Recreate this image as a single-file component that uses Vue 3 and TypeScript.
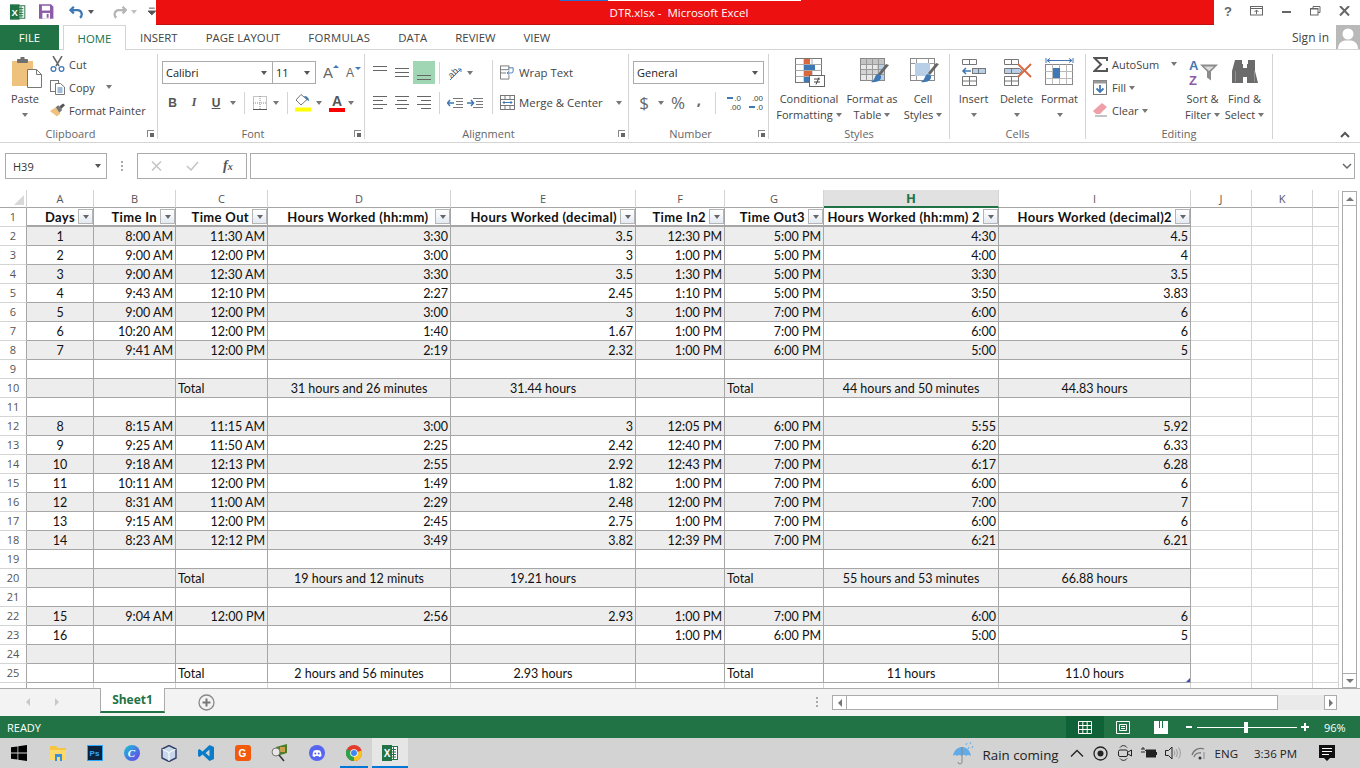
<script setup lang="ts">
interface SheetRow {
  n: number
  cells: string[]
  total?: boolean
}

const columns = ['A', 'B', 'C', 'D', 'E', 'F', 'G', 'H', 'I', 'J', 'K', '']

const headers = [
  'Days', 'Time In', 'Time Out', 'Hours Worked (hh:mm)\u00a0', 'Hours Worked (decimal)',
  'Time In2', 'Time Out3', 'Hours Worked (hh:mm) 2', 'Hours Worked (decimal)2',
]

const raw: (string[] | null)[] = [
  ['1', '8:00 AM', '11:30 AM', '3:30', '3.5', '12:30 PM', '5:00 PM', '4:30', '4.5'],
  ['2', '9:00 AM', '12:00 PM', '3:00', '3', '1:00 PM', '5:00 PM', '4:00', '4'],
  ['3', '9:00 AM', '12:30 AM', '3:30', '3.5', '1:30 PM', '5:00 PM', '3:30', '3.5'],
  ['4', '9:43 AM', '12:10 PM', '2:27', '2.45', '1:10 PM', '5:00 PM', '3:50', '3.83'],
  ['5', '9:00 AM', '12:00 PM', '3:00', '3', '1:00 PM', '7:00 PM', '6:00', '6'],
  ['6', '10:20 AM', '12:00 PM', '1:40', '1.67', '1:00 PM', '7:00 PM', '6:00', '6'],
  ['7', '9:41 AM', '12:00 PM', '2:19', '2.32', '1:00 PM', '6:00 PM', '5:00', '5'],
  null,
  ['', '', 'Total', '31 hours and 26 minutes', '31.44 hours', '', 'Total', '44 hours and 50 minutes', '44.83 hours'],
  null,
  ['8', '8:15 AM', '11:15 AM', '3:00', '3', '12:05 PM', '6:00 PM', '5:55', '5.92'],
  ['9', '9:25 AM', '11:50 AM', '2:25', '2.42', '12:40 PM', '7:00 PM', '6:20', '6.33'],
  ['10', '9:18 AM', '12:13 PM', '2:55', '2.92', '12:43 PM', '7:00 PM', '6:17', '6.28'],
  ['11', '10:11 AM', '12:00 PM', '1:49', '1.82', '1:00 PM', '7:00 PM', '6:00', '6'],
  ['12', '8:31 AM', '11:00 AM', '2:29', '2.48', '12:00 PM', '7:00 PM', '7:00', '7'],
  ['13', '9:15 AM', '12:00 PM', '2:45', '2.75', '1:00 PM', '7:00 PM', '6:00', '6'],
  ['14', '8:23 AM', '12:12 PM', '3:49', '3.82', '12:39 PM', '7:00 PM', '6:21', '6.21'],
  null,
  ['', '', 'Total', '19 hours and 12 minuts', '19.21 hours', '', 'Total', '55 hours and 53 minutes', '66.88 hours'],
  null,
  ['15', '9:04 AM', '12:00 PM', '2:56', '2.93', '1:00 PM', '7:00 PM', '6:00', '6'],
  ['16', '', '', '', '', '1:00 PM', '6:00 PM', '5:00', '5'],
  null,
  ['', '', 'Total', '2 hours and 56 minutes', '2.93 hours', '', 'Total', '11 hours', '11.0 hours'],
]

const rows: SheetRow[] = raw.map((cells, i) => ({
  n: i + 2,
  cells: cells ?? Array(9).fill(''),
  total: cells?.[2] === 'Total',
}))

const tabs = ['INSERT', 'PAGE LAYOUT', 'FORMULAS', 'DATA', 'REVIEW', 'VIEW']

function cellClass(row: SheetRow, col: number) {
  let align = col === 0 ? 'center' : 'right'
  if (row.total) {
    if (col === 2 || col === 6) align = 'left'
    else align = 'center'
  }
  return [align, row.n % 2 === 0 ? 'band' : '', col === 8 ? 'edge' : '']
}
</script>

<template>
  <div class="app">
    <header class="titlebar">
      <div class="qat">
        <svg class="xl" width="18" height="18" viewBox="0 0 18 18">
          <rect x="7" y="2.500" width="9.500" height="13" fill="#fff" stroke="#217346" />
          <path d="M10 5.500h5M10 8h5M10 10.500h5M10 13h5M12.500 3v12" stroke="#217346" fill="none" />
          <rect x="1" y="1" width="10" height="16" fill="#217346" />
          <text x="6" y="13" text-anchor="middle" class="xl-x">X</text>
        </svg>
        <svg width="15" height="15" viewBox="0 0 15 15">
          <path d="M0 0h12.500L15 2.500V15H0z" fill="#8d5aa8" />
          <rect x="3" y="1.500" width="8.500" height="5" fill="#fff" />
          <rect x="3.500" y="9" width="8" height="6" fill="#fff" />
          <rect x="8" y="10" width="2" height="4" fill="#8d5aa8" />
        </svg>
        <svg width="16" height="14" viewBox="0 0 16 14">
          <path d="M5 1.500 1.500 5 5 8.500M2 5h7.500a4.500 4.500 0 0 1 2 8" fill="none" stroke="#3f78b5" stroke-width="2.400" />
        </svg>
        <span class="caret dark" />
        <svg class="redo" width="16" height="14" viewBox="0 0 16 14">
          <path d="M11 1.500 14.500 5 11 8.500M14 5H6.500a4.500 4.500 0 0 0-2 8" fill="none" stroke="#b5b5b5" stroke-width="2.400" />
        </svg>
        <span class="caret pale" />
        <svg class="custom" width="8" height="9" viewBox="0 0 8 9">
          <path d="M1 1h6M0 4h8L4 8z" stroke="#555" stroke-width="1" fill="#555" />
        </svg>
      </div>
      <div class="redband">
        <i class="progress"><b /></i>
        <span>DTR.xlsx -&nbsp; Microsoft Excel</span>
      </div>
      <div class="winctl">
        <span class="help">?</span>
        <svg width="14" height="10" viewBox="0 0 14 10">
          <rect x=".5" y=".5" width="12" height="8.500" fill="none" stroke="#666" />
          <path d="M.5 2.500h12M6.500 8V4M4.500 6l2-2 2 2" fill="none" stroke="#666" />
        </svg>
        <svg width="10" height="10" viewBox="0 0 10 10"><rect y="5" width="9" height="2" fill="#666" /></svg>
        <svg width="11" height="10" viewBox="0 0 11 10">
          <path d="M3 2V.5h7v6H8" fill="none" stroke="#666" />
          <rect x=".5" y="2.500" width="7.500" height="6.500" fill="none" stroke="#666" />
          <path d="M.5 3h7.500" stroke="#666" />
        </svg>
        <svg width="11" height="10" viewBox="0 0 11 10">
          <path d="M1 0 10 9.500M10 0 1 9.500" stroke="#666" stroke-width="2" />
        </svg>
      </div>
    </header>

    <nav class="tabbar">
      <span class="file">FILE</span>
      <span class="home">HOME</span>
      <span v-for="t in tabs" :key="t" class="tab">{{ t }}</span>
      <span class="signin">Sign in</span>
      <svg class="avatar" width="24" height="24" viewBox="0 0 24 24">
        <rect width="24" height="24" fill="#b9b9b9" />
        <circle cx="12" cy="9" r="5.500" fill="#fff" />
        <path d="M2 24c0-6 4-8 7-8.500h6c3 .5 7 2.500 7 8.500z" fill="#fff" />
      </svg>
    </nav>

    <section class="ribbon">
      <!-- Clipboard -->
      <div class="group g-clip">
        <div class="body">
          <div class="big paste">
            <svg class="big-icon" width="30" height="33" viewBox="0 0 30 33">
              <rect x="0" y="4" width="21" height="25" fill="#eec27d" />
              <rect x="5" y="2" width="11" height="4" rx="1" fill="#6f6f6f" />
              <rect x="8.500" y="0" width="4" height="3" fill="#6f6f6f" />
              <path d="M15.500 12.500h9l5 5v13h-14z" fill="#fff" stroke="#777" />
              <path d="M24.500 12.500v5h5" fill="none" stroke="#777" />
            </svg>
            <span>Paste</span>
            <i class="caret" />
          </div>
          <div class="smalls">
            <div class="small">
              <svg width="15" height="16" viewBox="0 0 15 16">
                <path d="M3 0l6 10M12 0 6 10" stroke="#666" stroke-width="1.500" />
                <circle cx="3.500" cy="13" r="2.400" fill="none" stroke="#3f78b5" stroke-width="1.300" />
                <circle cx="11.500" cy="13" r="2.400" fill="none" stroke="#3f78b5" stroke-width="1.300" />
              </svg>
              <span>Cut</span>
            </div>
            <div class="small">
              <svg width="15" height="15" viewBox="0 0 15 15">
                <rect x=".5" y=".5" width="8" height="11" fill="#fff" stroke="#777" />
                <path d="M5.500 3.500h5l4 3.500v7.500h-9z" fill="#fff" stroke="#777" />
                <path d="M7.500 8h5M7.500 10h5M7.500 12h5" stroke="#3f78b5" />
              </svg>
              <span>Copy</span>
              <i class="caret copy-caret" />
            </div>
            <div class="small">
              <svg width="15" height="15" viewBox="0 0 16 15">
                <path d="M0 8l6-4 5 7-4 3C6 12 2 10 0 8z" fill="#eec27d" />
                <path d="M6 4l3-2 4 5-3 3z" fill="#777" />
                <path d="M10 3l4-3 2 2-4 4z" fill="#555" />
              </svg>
              <span>Format Painter</span>
            </div>
          </div>
        </div>
        <div class="label clip-l">Clipboard<i class="launch" /></div>
      </div>

      <!-- Font -->
      <div class="group g-font">
        <div class="body col">
          <div class="row r1">
            <div class="combo font-name">Calibri<i class="caret dark" /></div>
            <div class="combo font-size">11<i class="caret dark" /></div>
            <span class="grow-a big-a">A<i class="up" /></span>
            <span class="grow-a small-a">A<i class="down" /></span>
          </div>
          <div class="row r2">
            <span class="tb w21 bold">B</span>
            <span class="tb w22 ital">I</span>
            <span class="tb w22 under">U</span>
            <span class="cr"><i class="caret" /></span>
            <i class="vsep" />
            <span class="tb w20">
              <svg width="14" height="14" viewBox="0 0 14 14">
                <rect x=".5" y=".5" width="13" height="13" fill="none" stroke="#888" stroke-dasharray="1 1" />
                <path d="M7 0v14M0 7h14" stroke="#888" stroke-dasharray="1 1" />
                <path d="M0 13.500h14" stroke="#555" />
              </svg>
            </span>
            <span class="cr"><i class="caret" /></span>
            <i class="vsep" />
            <span class="tb w20">
              <svg width="17" height="18" viewBox="0 0 17 18">
                <path d="M6 .5 1 6l5 5 6-5.500z" fill="#fff" stroke="#777" />
                <path d="M9 2c3 0 5 2 5 5l-2-1z" fill="#3f78b5" />
                <rect y="13.500" width="16" height="4" fill="#ffff00" />
              </svg>
            </span>
            <span class="cr"><i class="caret" /></span>
            <span class="tb w16 acolor">A<i /></span>
            <span class="cr"><i class="caret" /></span>
          </div>
        </div>
        <div class="label with-l">Font<i class="launch" /></div>
      </div>

      <!-- Alignment -->
      <div class="group g-align">
        <div class="body">
          <div class="col aligncol">
            <div class="row r1">
              <span class="tb w22"><i class="lines top"><b /><b /></i></span>
              <span class="tb w22"><i class="lines"><b /><b /><b /></i></span>
              <span class="tb w22 on"><i class="lines bottom"><b /><b /></i></span>
              <i class="vsep s4" />
              <span class="tb w18">
                <svg width="16" height="16" viewBox="0 0 16 16">
                  <text x="1" y="11" transform="rotate(-45 6 8)" class="orient">ab</text>
                  <path d="M3 15 14 4M11 4h3v3" fill="none" stroke="#3f78b5" />
                </svg>
              </span>
              <span class="cr"><i class="caret" /></span>
            </div>
            <div class="row r2">
              <span class="tb w22"><i class="lines al"><b /><b class="s" /><b /><b class="s" /></i></span>
              <span class="tb w22"><i class="lines ac"><b /><b class="s" /><b /><b class="s" /></i></span>
              <span class="tb w22"><i class="lines ar"><b /><b class="s" /><b /><b class="s" /></i></span>
              <i class="vsep s4" />
              <span class="tb w18">
                <svg width="16" height="10" viewBox="0 0 16 10">
                  <path d="M6 .5h10M9 3.500h7M9 6.500h7M6 9.500h10" stroke="#777" />
                  <path d="M0 5h7M3 2 .5 5 3 8" fill="none" stroke="#3f78b5" stroke-width="1.500" />
                </svg>
              </span>
              <span class="tb w22">
                <svg width="16" height="10" viewBox="0 0 16 10">
                  <path d="M6 .5h10M9 3.500h7M9 6.500h7M6 9.500h10" stroke="#777" />
                  <path d="M0 5h7M4 2l2.500 3L4 8" fill="none" stroke="#3f78b5" stroke-width="1.500" />
                </svg>
              </span>
            </div>
          </div>
          <i class="vsep tall" />
          <div class="col wrapcol">
            <div class="row r1 txt">
              <svg width="15" height="15" viewBox="0 0 16 15">
                <rect x=".5" y=".5" width="9" height="4" fill="none" stroke="#777" />
                <path d="M.5 5v9.500h9v-4M.5 8h6" fill="none" stroke="#777" />
                <path d="M9 2.500h5v3.500a2 2 0 0 1-2 2H8M10 6 7.500 8l2.500 2" fill="none" stroke="#3f78b5" />
              </svg>
              <span>Wrap Text</span>
            </div>
            <div class="row r2 txt">
              <svg width="15" height="15" viewBox="0 0 15 15">
                <rect x=".5" y=".5" width="14" height="14" fill="none" stroke="#777" />
                <path d="M.5 4.500h14M.5 10.500h14M5 .5v4M10 .5v4M5 10.500v4M10 10.500v4" stroke="#777" />
                <path d="M3 7.500h9M4.500 6 3 7.500 4.500 9M10.500 6 12 7.500 10.500 9" fill="none" stroke="#3f78b5" />
              </svg>
              <span>Merge &amp; Center</span>
              <i class="caret merge-caret" />
            </div>
          </div>
        </div>
        <div class="label with-l">Alignment<i class="launch" /></div>
      </div>

      <!-- Number -->
      <div class="group g-num">
        <div class="body col">
          <div class="row r1"><div class="combo num">General<i class="caret dark" /></div></div>
          <div class="row r2">
            <span class="tb w22 sym dollar">$</span>
            <span class="cr"><i class="caret" /></span>
            <span class="tb w22 sym pct-sym">%</span>
            <span class="tb w20 sym comma">,</span>
            <i class="vsep s7" />
            <span class="dec"><i class="dline"><i class="arrow-l" />.0</i><i class="dline">.00</i></span>
            <span class="dec"><i class="dline">.00</i><i class="dline"><i class="arrow-r" />.0</i></span>
          </div>
        </div>
        <div class="label with-l">Number<i class="launch" /></div>
      </div>

      <!-- Styles -->
      <div class="group g-styles">
        <div class="body bigs">
          <div class="big cond">
            <svg class="big-icon" width="31" height="33" viewBox="0 0 31 33">
              <rect x=".5" y="1.500" width="26" height="24" fill="#fff" stroke="#777" />
              <path d="M9 1.500v24M17 1.500v24M.5 7.500h26M.5 13.500h26M.5 19.500h26" stroke="#aaa" />
              <rect x="9" y="2" width="6" height="5" fill="#d9683f" />
              <rect x="9" y="8" width="11" height="5" fill="#3f78b5" />
              <rect x="9" y="14" width="8" height="5" fill="#d9683f" />
              <rect x="9" y="20" width="5" height="5" fill="#3f78b5" />
              <rect x="14.500" y="18.500" width="15" height="11" fill="#fff" stroke="#666" />
              <path d="M19 22h6M19 25h6M24 20.500l-3 7" stroke="#444" />
            </svg>
            <span>Conditional</span>
            <span>Formatting<i class="caret in" /></span>
          </div>
          <div class="big ftable">
            <svg class="big-icon" width="30" height="33" viewBox="0 0 30 33">
              <rect x=".5" y="1.500" width="24" height="22" fill="#e8e8e8" stroke="#888" />
              <rect x="1" y="2" width="23" height="5" fill="#c4c4c4" />
              <rect x="17" y="7" width="7" height="16" fill="#b9cfe8" />
              <rect x="1" y="12" width="16" height="5" fill="#d4d4d4" />
              <path d="M6.500 1.500v22M12.500 1.500v22M18.500 1.500v22M.5 7.500h24M.5 12.500h24M.5 17.500h24" stroke="#999" />
              <path d="M29 8l-9 11-2-2 8-10z" fill="#666" />
              <path d="M18 17c-4 1-2 5-7 8 6 1 11-2 10-6z" fill="#3f78b5" />
            </svg>
            <span>Format as</span>
            <span>Table<i class="caret in" /></span>
          </div>
          <div class="big cstyles">
            <svg class="big-icon" width="30" height="33" viewBox="0 0 30 33">
              <rect x=".5" y="1.500" width="24" height="22" fill="#fff" stroke="#888" />
              <path d="M6.500 1.500v5M18.500 1.500v5M.5 6.500h24M.5 18.500h24M6.500 18.500v5M18.500 18.500v5" stroke="#999" />
              <rect x="5" y="6" width="15" height="13" fill="#b9cfe8" />
              <path d="M29 7l-9 11-2-2 8-10z" fill="#666" />
              <path d="M18 17c-4 1-2 5-7 8 6 1 11-2 10-6z" fill="#3f78b5" />
            </svg>
            <span>Cell</span>
            <span>Styles<i class="caret in" /></span>
          </div>
        </div>
        <div class="label">Styles</div>
      </div>

      <!-- Cells -->
      <div class="group g-cells">
        <div class="body bigs">
          <div class="big cell-btn">
            <svg class="big-icon" width="27" height="33" viewBox="0 0 27 33">
              <path d="M2.500 2.500h14v5h-14zM9.500 2.500v5M2.500 19.500h14v9h-14zM2.500 24h14M9.500 19.500v9" fill="none" stroke="#777" />
              <rect x="12.500" y="11.500" width="13" height="5" fill="#b9cfe8" stroke="#777" />
              <path d="M18.500 11.500v5" stroke="#777" />
              <path d="M11 14H3M6 11 3 14l3 3" fill="none" stroke="#3f78b5" stroke-width="1.500" />
            </svg>
            <span>Insert</span>
            <i class="caret under-c" />
          </div>
          <div class="big cell-btn">
            <svg class="big-icon" width="31" height="33" viewBox="0 0 31 33">
              <path d="M3.500 2.500h14v5h-14zM10.500 2.500v5M3.500 19.500h14v9h-14zM3.500 24h14M10.500 19.500v9" fill="none" stroke="#777" />
              <path d="M3.500 11.500h15l3 2.500-3 2.500h-15zM10.500 11.500v5" fill="#b9cfe8" stroke="#777" />
              <path d="M17 7l13 13M30 7 17 20" stroke="#d9683f" stroke-width="1.800" />
            </svg>
            <span>Delete</span>
            <i class="caret under-c" />
          </div>
          <div class="big cell-btn">
            <svg class="big-icon" width="30" height="33" viewBox="0 0 30 33">
              <path d="M1 1v5M28 1v5M2 3.500h25M5 1.500 2 3.500l3 2M24 1.500l3 2-3 2" fill="none" stroke="#3f78b5" />
              <rect x=".5" y="7.500" width="27" height="20" fill="#fff" stroke="#888" />
              <path d="M7.500 7.500v20M14.500 7.500v20M21.500 7.500v20M.5 14.500h27M.5 21.500h27" stroke="#bbb" />
              <rect x="8" y="11" width="7" height="10" fill="#3f78b5" />
            </svg>
            <span>Format</span>
            <i class="caret under-c" />
          </div>
        </div>
        <div class="label">Cells</div>
      </div>

      <!-- Editing -->
      <div class="group g-edit">
        <div class="body">
          <div class="smalls edits">
            <div class="small">
              <svg width="15" height="15" viewBox="0 0 15 15">
                <path d="M14 4V1H1.500L8 7.500 1.500 14H14v-3" fill="none" stroke="#555" stroke-width="2" />
              </svg>
              <span>AutoSum</span>
              <i class="caret sum-caret" />
            </div>
            <div class="small">
              <svg width="15" height="15" viewBox="0 0 15 15">
                <rect x=".5" y=".5" width="13" height="14" fill="#fff" stroke="#777" />
                <rect x=".5" y=".5" width="13" height="3" fill="#999" />
                <path d="M7 5v7M3.500 8.500 7 12l3.500-3.500" fill="none" stroke="#3f78b5" stroke-width="1.800" />
              </svg>
              <span>Fill<i class="caret in" /></span>
            </div>
            <div class="small">
              <svg width="15" height="14" viewBox="0 0 15 14">
                <path d="M9 0l5 4-7 7H3L0 8z" fill="#ee9fa8" />
                <path d="M2 13h12" stroke="#888" />
              </svg>
              <span>Clear<i class="caret in" /></span>
            </div>
          </div>
          <div class="big sort">
            <svg class="big-icon" width="32" height="33" viewBox="0 0 32 33">
              <text x="2" y="13" class="az a">A</text>
              <text x="2" y="28" class="az z">Z</text>
              <path d="M13 7.500h18l-7 7v9l-4-3v-6z" fill="#8c8c8c" />
              <path d="M17 9.500h10l-5 4.500z" fill="#dcdcdc" />
            </svg>
            <span>Sort &amp;</span>
            <span>Filter<i class="caret in" /></span>
          </div>
          <div class="big find">
            <svg class="big-icon" width="28" height="33" viewBox="0 0 28 33">
              <path d="M4 3h7v4h1v19H1V14zM17 3h7v11l3 12H16V7h1z" fill="#6b6b6b" />
              <rect x="12" y="11" width="4" height="9" fill="#6b6b6b" />
              <path d="M13.500 4v6M14.500 4v6" stroke="#fff" />
              <path d="M4.500 14v11M23.500 14v11" stroke="#909090" />
            </svg>
            <span>Find &amp;</span>
            <span>Select<i class="caret in" /></span>
          </div>
        </div>
        <div class="label">Editing</div>
      </div>

      <div class="collapse">
        <svg width="10" height="7" viewBox="0 0 10 7"><path d="M1 6l4-4 4 4" fill="none" stroke="#555" stroke-width="2" /></svg>
      </div>
    </section>

    <section class="formula">
      <div class="namebox">H39<i class="caret dark" /></div>
      <div class="fdots"><b /><b /><b /></div>
      <div class="fbtns">
        <svg width="11" height="10" viewBox="0 0 11 10"><path d="M1 .5l9 9M10 .5l-9 9" stroke="#c4c4c4" stroke-width="1.500" /></svg>
        <svg width="13" height="10" viewBox="0 0 13 10"><path d="M1 5l4 4 7-8" fill="none" stroke="#c4c4c4" stroke-width="1.500" /></svg>
        <span class="fx">f<small>x</small></span>
      </div>
      <div class="finput" />
      <i class="fcaret"><svg width="10" height="7" viewBox="0 0 10 7"><path d="M1 1l4 4 4-4" fill="none" stroke="#666" stroke-width="1.500" /></svg></i>
    </section>

    <section class="workarea">
      <div class="sheet">
        <div class="corner"><i /></div>
        <div v-for="(c, i) in columns" :key="'h' + i" class="colhead" :class="{ sel: c === 'H' }">{{ c }}</div>

        <div class="rowhead">1</div>
        <div v-for="h in headers" :key="h" class="hcell">
          <span>{{ h }}</span>
          <i class="filter"><b /></i>
        </div>
        <div class="blank" /><div class="blank" /><div class="blank" />

        <template v-for="row in rows" :key="row.n">
          <div class="rowhead">{{ row.n }}</div>
          <div v-for="(c, i) in row.cells" :key="i" class="cell" :class="cellClass(row, i)">{{ c }}<i v-if="row.n === 25 && i === 8" class="handle" /></div>
          <div class="blank" /><div class="blank" /><div class="blank" />
        </template>

        <div class="rowhead" />
        <div v-for="i in 12" :key="'last' + i" class="blank" />
      </div>
      <aside class="vscroll">
        <i class="sbtn"><b class="tri-up" /></i>
        <i class="vthumb" />
        <i class="sbtn"><b class="tri-down" /></i>
      </aside>
    </section>

    <section class="sheetbar">
      <i class="nav-l" />
      <i class="nav-r" />
      <div class="sheettab">Sheet1</div>
      <svg class="plus" width="17" height="17" viewBox="0 0 17 17">
        <circle cx="8.500" cy="8.500" r="7.500" fill="none" stroke="#888" stroke-width="1.300" />
        <path d="M8.500 4.500v8M4.500 8.500h8" stroke="#777" stroke-width="2" />
      </svg>
      <div class="hdots"><b /><b /><b /></div>
      <div class="hscroll">
        <i class="hbtn"><b class="tri-left" /></i>
        <i class="hthumb" />
        <i class="hbtn right"><b class="tri-right" /></i>
      </div>
    </section>

    <footer class="status">
      <span class="ready">READY</span>
      <div class="views">
        <span class="view active">
          <svg width="14" height="13" viewBox="0 0 14 13"><path d="M.5.500h13v12H.500zM.5 4.500h13M.5 8.500h13M4.800.500v12M9.200.500v12" fill="none" stroke="#fff" /></svg>
        </span>
        <span class="view">
          <svg width="14" height="13" viewBox="0 0 14 13"><path d="M.5.500h13v12H.500z" fill="none" stroke="#fff" /><path d="M3.500 3.500h7v6h-7zM5 5.500h4M5 7.500h4" fill="none" stroke="#fff" /></svg>
        </span>
        <span class="view">
          <svg width="14" height="13" viewBox="0 0 14 13"><path d="M0 0h14v13H0z" fill="#fff" /><path d="M5 0v7h1V0zM8 0v7h1V0z" fill="#217346" /></svg>
        </span>
      </div>
      <div class="zoom">
        <b class="zm" />
        <div class="ztrack"><i /></div>
        <b class="zp" />
      </div>
      <span class="pct">96%</span>
    </footer>

    <footer class="taskbar">
      <div class="apps">
        <span class="app-i start">
          <svg width="16" height="16" viewBox="0 0 16 16"><path d="M0 2.300 6.500 1.400v6.200H0zM7.300 1.300 16 0v7.600H7.300zM0 8.400h6.500v6.200L0 13.700zM7.300 8.400H16V16l-8.700-1.300z" fill="#000" /></svg>
        </span>
        <span class="app-i">
          <svg width="16" height="16" viewBox="0 0 16 16">
            <path d="M0 1h6l2 2h8v12H0z" fill="#f5c542" />
            <rect y="5" width="16" height="10" fill="#fcd96b" />
            <rect x="5" y="9" width="7" height="7" fill="#3b8fd8" />
            <rect x="7" y="12" width="3" height="4" fill="#fcd96b" />
          </svg>
        </span>
        <span class="app-i"><i class="ps">Ps</i></span>
        <span class="app-i"><i class="canva">C</i></span>
        <span class="app-i">
          <svg width="16" height="17" viewBox="0 0 16 17">
            <path d="M8 .5 15 4v9l-7 3.500L1 13V4z" fill="#c6d8ea" stroke="#333f66" stroke-width="1.400" />
            <path d="M1.500 4.500 8 7.500l6.500-3M8 7.500V16" fill="none" stroke="#fff" />
          </svg>
        </span>
        <span class="app-i">
          <svg width="16" height="16" viewBox="0 0 16 16">
            <path d="M11.500 0 16 2v12l-4.500 2L4.500 9.500 1.500 12 0 11V5l1.500-1 3 2.500zM11.500 4.500 7.500 8l4 3.500z" fill="#0a7cc8" />
          </svg>
        </span>
        <span class="app-i"><i class="orange">G</i></span>
        <span class="app-i">
          <svg width="17" height="18" viewBox="0 0 17 18">
            <path d="M5 3 16 0v9L6 12z" fill="#4d7c2a" />
            <path d="M9 3h5v5H9z" fill="#c9a14a" />
            <circle cx="5" cy="8" r="4" fill="#e8e8e8" stroke="#777" />
            <path d="M8 11l5 6" stroke="#333" stroke-width="1.500" />
          </svg>
        </span>
        <span class="app-i">
          <svg width="16" height="16" viewBox="0 0 16 16">
            <circle cx="8" cy="8" r="8" fill="#5865f2" />
            <path d="M3.500 11C3.500 8 4.500 6 5 5.500c2-.8 4-.8 6 0 .5.500 1.500 2.500 1.500 5.500-1 .7-2 1-2.500 1l-.6-1h-2.800l-.6 1c-.5 0-1.500-.3-2.500-1z" fill="#fff" />
            <circle cx="6.300" cy="8.500" r="1" fill="#5865f2" />
            <circle cx="9.700" cy="8.500" r="1" fill="#5865f2" />
          </svg>
        </span>
        <span class="app-i open">
          <svg width="16" height="16" viewBox="0 0 16 16">
            <circle cx="8" cy="8" r="8" fill="#e33b2e" />
            <path d="M8 8 15.600 5.500A8 8 0 0 1 8 16z" fill="#f7c325" />
            <path d="M8 8 8 16A8 8 0 0 1 1 4z" fill="#2ba24c" />
            <circle cx="8" cy="8" r="3.800" fill="#fff" />
            <circle cx="8" cy="8" r="3" fill="#3f86f4" />
          </svg>
        </span>
        <span class="app-i current">
          <svg width="18" height="18" viewBox="0 0 18 18">
            <rect x="7" y="2.500" width="9.500" height="13" fill="#fff" stroke="#217346" />
            <path d="M10 5.500h5M10 8h5M10 10.500h5M10 13h5M12.500 3v12" stroke="#217346" fill="none" />
            <rect x="1" y="1" width="10" height="16" fill="#217346" />
            <text x="6" y="13" text-anchor="middle" class="xl-x">X</text>
          </svg>
        </span>
      </div>
      <div class="tray">
        <svg class="umbrella" width="23" height="24" viewBox="0 0 23 24">
          <path d="M1 15C2 8 7 6 10 6s8 2 9 9c-2-1.500-4-1.500-4.500 0-1-1.500-4-1.500-5 0-1-1.500-3.500-1.500-4.500 0-1-1.500-3-1.500-4 0z" fill="#62abe6" />
          <path d="M10 6v15a2 2 0 0 1-4 0" fill="none" stroke="#888" />
          <path d="M15 2l-1 2M19 1l-1 2M21 5l-1 2M17 6l-1 2" stroke="#62abe6" />
        </svg>
        <span class="rain">Rain coming</span>
        <svg class="t1" width="14" height="8" viewBox="0 0 14 8"><path d="M1 7.500l6-6 6 6" fill="none" stroke="#222" stroke-width="1.300" /></svg>
        <svg class="t2" width="15" height="15" viewBox="0 0 15 15"><circle cx="7.500" cy="7.500" r="6.500" fill="none" stroke="#222" stroke-width="1.300" /><circle cx="7.500" cy="7.500" r="3" fill="#222" /></svg>
        <svg class="t3" width="14" height="16" viewBox="0 0 14 16"><path d="M2 2.500C4 0 7 0 9 2.500M2 13.500c2 2.500 5 2.500 7 0" fill="none" stroke="#222" /><rect x=".5" y="5" width="9" height="6.500" rx="1.500" fill="none" stroke="#222" /><path d="M10 7l3.500-2v6L10 9" fill="none" stroke="#222" /></svg>
        <svg class="t4" width="16" height="12" viewBox="0 0 16 12"><path d="M0 2h4M0 5h4M2 0v2M4 3.500h2" stroke="#222" /><rect x="5" y="2.500" width="10" height="8" fill="#222" /><path d="M15 5h1v3h-1z" fill="#222" /></svg>
        <svg class="t5" width="16" height="14" viewBox="0 0 16 14"><path d="M.5 4.500h3L7 1v12L3.500 9.500h-3z" fill="none" stroke="#222" /><path d="M9 4.500c1 1.500 1 3.500 0 5M11 3c1.800 2.500 1.800 5.500 0 8M13.500 1.500c2.500 3 2.500 8 0 11" fill="none" stroke="#999" /></svg>
        <svg class="t6" width="14" height="14" viewBox="0 0 14 14"><path d="M1 9a9 9 0 0 1 12-6M3 11a6 6 0 0 1 7-4" fill="none" stroke="#777" stroke-width="1.300" /><circle cx="9" cy="12" r="1.500" fill="#333" /><path d="M13 6v7" stroke="#888" /></svg>
        <span class="eng">ENG</span>
        <span class="clock">3:36 PM</span>
        <svg class="bubble" width="16" height="16" viewBox="0 0 16 16"><path d="M0 0h16v13h-5l-3 3-3-3H0z" fill="#111" /><path d="M3 3.500h10M3 6.500h10M3 9.500h7" stroke="#fff" /></svg>
      </div>
    </footer>
  </div>
</template>

<style scoped>
.app {
  width: 1360px;
  height: 768px;
  overflow: hidden;
  display: flex;
  flex-direction: column;
  background: #fff;
  font-family: "Open Sans", "Noto Sans", sans-serif;
  font-size: 11px;
  color: #444;
}
i { font-style: normal; }

.caret {
  display: inline-block;
  width: 0;
  height: 0;
  border: 3px solid transparent;
  border-top: 4px solid #777;
  border-bottom: 0;
}
.caret.dark { border-top-color: #555; }
.caret.pale { border-top-color: #c0c0c0; }
.caret.in { margin-left: 3px; vertical-align: 2px; }

/* title */
.titlebar { display: flex; height: 25px; flex: none; }
.qat { width: 156px; display: flex; align-items: center; padding: 0 0 2px 9px; box-sizing: border-box; }
.qat > svg:nth-child(2) { margin-left: 13px; }
.qat > svg:nth-child(3) { margin-left: 15px; }
.qat > .caret { margin-left: 4px; }
.qat .redo { margin-left: 18px; }
.qat .custom { margin-left: 11px; }
.xl-x { font: bold 10px "Liberation Sans", sans-serif; fill: #fff; }
.redband {
  flex: 1;
  background: #ec1010;
  border-bottom: 1px solid #c01010;
  box-sizing: border-box;
  color: #fff;
  display: flex;
  justify-content: center;
  align-items: center;
  position: relative;
  font-size: 11.500px;
  padding: 1px 12px 0 0;
}
.progress { position: absolute; left: 404px; top: 0; width: 241px; height: 1px; background: #fff; }
.progress b { display: block; width: 48px; height: 1px; background: #2a6fd0; }
.winctl { width: 146px; display: flex; align-items: center; padding: 0 0 3px 10px; box-sizing: border-box; gap: 18px; }
.winctl .help { font: bold 13px "Liberation Sans", sans-serif; color: #666; width: 8px; }

/* tabs */
.tabbar { display: flex; height: 25px; flex: none; border-bottom: 1px solid #d4d4d4; box-sizing: border-box; font-size: 11.400px; align-items: stretch; }
.file { width: 59px; background: #217346; color: #fff; display: flex; align-items: center; justify-content: center; margin-bottom: -1px; }
.home {
  width: 63px;
  margin-left: 4px;
  box-sizing: border-box;
  border: 1px solid #d4d4d4;
  border-bottom: 0;
  margin-bottom: -1px;
  background: #fff;
  color: #217346;
  display: flex;
  align-items: center;
  justify-content: center;
}
.tab { padding: 0 14px; display: flex; align-items: center; }
.tab:nth-child(5) { letter-spacing: .3px; }
.signin { margin-left: auto; display: flex; align-items: center; font-size: 12px; margin-right: 7px; }
.avatar { flex: none; }

/* ribbon */
.ribbon { display: flex; height: 93px; flex: none; padding-top: 4px; box-sizing: border-box; border-bottom: 1px solid #d4d4d4; position: relative; }
.group { height: 85px; box-sizing: border-box; border-right: 1px solid #d4d4d4; display: flex; flex-direction: column; flex: none; }
.g-clip { width: 158px; }
.g-font { width: 207px; padding-left: 4px; }
.g-align { width: 264px; padding-left: 4px; }
.g-num { width: 140px; padding-left: 4px; }
.g-styles { width: 181px; }
.g-cells { width: 136px; }
.g-edit { width: 187px; }
.body { height: 73px; display: flex; flex: none; }
.body.col, .col { display: flex; flex-direction: column; }
.label { height: 12px; line-height: 14px; text-align: center; position: relative; color: #666; font-size: 11px; }
.label.with-l { padding-right: 20px; }
.label.clip-l { padding-right: 16px; }
.launch {
  position: absolute;
  right: 3px;
  top: 3px;
  width: 7px;
  height: 7px;
  border-left: 1px solid #888;
  border-top: 1px solid #888;
  box-sizing: border-box;
}
.launch::after { content: ""; position: absolute; right: 0; bottom: 0; width: 4px; height: 4px; background: #666; }
.row { display: flex; align-items: center; }
.r1 { margin-top: 7px; height: 23px; }
.r2 { margin-top: 8px; height: 21px; }
.combo {
  height: 23px;
  box-sizing: border-box;
  border: 1px solid #ababab;
  display: flex;
  align-items: center;
  justify-content: space-between;
  padding: 0 5px 0 3px;
  color: #222;
  background: #fff;
}
.font-name { width: 111px; }
.font-size { width: 44px; margin-left: -1px; }
.num { width: 131px; padding-left: 3px; }
.grow-a { color: #666; position: relative; font-family: "Liberation Sans", sans-serif; }
.big-a { font-size: 15px; margin-left: 7px; width: 16px; }
.small-a { font-size: 12px; margin-left: 7px; width: 15px; }
.up, .down { position: absolute; right: 0; top: 1px; border: 3px solid transparent; }
.up { border-bottom: 3px solid #3f78b5; border-top: 0; }
.down { border-top: 3px solid #3f78b5; border-bottom: 0; }
.tb { display: flex; align-items: center; justify-content: center; height: 21px; flex: none; font-family: "Liberation Sans", sans-serif; color: #555; }
.w16 { width: 16px; }
.w18 { width: 18px; }
.w20 { width: 20px; }
.w21 { width: 21px; }
.w22 { width: 22px; }
.cr { width: 12px; display: flex; justify-content: center; flex: none; }
.bold { font-weight: bold; font-size: 12px; }
.ital { font-style: italic; font-size: 12px; font-family: "Liberation Serif", serif; font-weight: bold; }
.under { text-decoration: underline; font-weight: bold; font-size: 12px; }
.vsep { width: 1px; height: 22px; background: #d4d4d4; flex: none; margin: 0 5px; display: block; }
.vsep.s4 { margin: 0 6px 0 4px; }
.vsep.s7 { margin: 0 6px 0 6px; }
.acolor { position: relative; font-weight: bold; font-size: 14px; padding-bottom: 4px; box-sizing: border-box; margin-left: 4px; }
.acolor i { position: absolute; left: 0; right: 0; bottom: 1px; height: 4px; background: #ff0000; }
.lines { display: flex; flex-direction: column; gap: 3px; width: 14px; height: 16px; justify-content: center; }
.lines b { height: 1px; background: #666; display: block; }
.lines.top { justify-content: flex-start; padding-top: 1px; box-sizing: border-box; }
.lines.bottom { justify-content: flex-end; padding-bottom: 1px; box-sizing: border-box; }
.lines.al b.s { width: 10px; }
.lines.ac b.s { width: 10px; align-self: center; }
.lines.ar b.s { width: 10px; align-self: flex-end; }
.on { background: #a0d6b4; height: 23px; }
.orient { font: 9px "Liberation Sans", sans-serif; fill: #555; }
.aligncol { width: 123px; flex: none; }
.vsep.tall { height: 54px; margin: 6px 7px 0 0; }
.wrapcol { flex: 1; }
.txt { gap: 4px; font-size: 11.400px; }
.merge-caret { margin-left: 9px; }
.sym { font-family: "Open Sans", sans-serif; font-size: 17px; color: #666; }
.dollar { font-size: 17px; }
.comma { font-weight: bold; padding-bottom: 8px; box-sizing: border-box; font-size: 15px; }
.dec { display: flex; flex-direction: column; align-items: flex-end; width: 19px; margin-right: 3px; flex: none; font: 8px/9px "Liberation Sans", sans-serif; color: #444; }
.dline { display: flex; align-items: center; height: 9px; }
.arrow-l, .arrow-r { display: block; width: 6px; height: 2px; background: #3f78b5; margin-right: 1px; }

.big { display: flex; flex-direction: column; align-items: center; padding-top: 3px; line-height: 16px; flex: none; box-sizing: border-box; font-size: 11px; }
.big-icon { margin-bottom: 1px; flex: none; }
.paste { width: 50px; }
.paste .big-icon { margin-left: 4px; }
.paste .caret { margin-top: 6px; }
.smalls { display: flex; flex-direction: column; gap: 3px; }
.small { height: 20px; display: flex; align-items: center; gap: 4px; white-space: nowrap; }
.copy-caret { margin-left: 7px; }
.g-styles .bigs { padding-left: 4px; }
.cond { width: 72px; }
.cond .big-icon { margin-left: 2px; }
.ftable { width: 54px; }
.ftable .big-icon { margin-left: 6px; }
.cstyles { width: 48px; }
.cstyles .big-icon { margin-left: 4px; }
.cell-btn { width: 43px; }
.g-cells .bigs { padding-left: 2px; }
.under-c { margin-top: 6px; }
.edits { width: 95px; padding-left: 7px; box-sizing: border-box; }
.sum-caret { margin-left: 8px; }
.sort { width: 43px; }
.find { width: 41px; }
.az { font: bold 13px "Liberation Sans", sans-serif; }
.az.a { fill: #3f78b5; }
.az.z { fill: #8d5aa8; }
.collapse { position: absolute; right: 10px; bottom: 4px; line-height: 0; }

/* formula */
.formula { height: 47px; flex: none; display: flex; padding-top: 10px; box-sizing: border-box; position: relative; }
.namebox {
  margin-left: 5px;
  width: 102px;
  height: 26px;
  box-sizing: border-box;
  border: 1px solid #ababab;
  display: flex;
  align-items: center;
  justify-content: space-between;
  padding: 0 5px 0 7px;
  color: #333;
}
.fdots { width: 30px; display: flex; flex-direction: column; align-items: center; justify-content: center; gap: 2px; height: 26px; }
.fdots b, .hdots b { display: block; width: 2px; height: 2px; background: #aaa; }
.fbtns {
  width: 110px;
  height: 26px;
  box-sizing: border-box;
  border: 1px solid #ababab;
  display: flex;
  align-items: center;
  gap: 24px;
  padding-left: 13px;
}
.fx { font: italic bold 14px "Liberation Serif", serif; color: #555; }
.fx small { font-size: 10px; }
.finput { margin-left: 3px; width: 1105px; height: 26px; box-sizing: border-box; border: 1px solid #ababab; }
.fcaret { position: absolute; right: 8px; top: 20px; line-height: 0; }

/* sheet */
.workarea { height: 498px; flex: none; display: flex; overflow: hidden; }
.sheet {
  width: 1339px;
  display: grid;
  grid-template-columns: 27px 67px 82px 92px 183px 185px 89px 99px 175px 192px 61px 61px 26px;
  grid-template-rows: 18px 19px;
  grid-auto-rows: 19px;
  align-content: start;
  font-family: Lato, "Liberation Sans", sans-serif;
  font-size: 12.500px;
  color: #111;
  flex: none;
}
.corner { border-right: 1px solid #d4d4d4; border-bottom: 1px solid #a6a6a6; position: relative; overflow: hidden; }
.corner i { position: absolute; right: 2px; bottom: 2px; border: 5px solid transparent; border-right-color: #d8d8d8; border-bottom-color: #d8d8d8; }
.colhead {
  font: 11px "Open Sans", sans-serif;
  color: #555;
  text-align: center;
  line-height: 17px;
  border-right: 1px solid #d4d4d4;
  border-bottom: 1px solid #a6a6a6;
  box-sizing: border-box;
}
.colhead.sel { background: #e1e1e1; color: #217346; font-weight: bold; font-size: 13px; border-bottom: 2px solid #217346; }
.rowhead {
  font: 11px "Open Sans", sans-serif;
  color: #555;
  text-align: center;
  line-height: 18px;
  border-right: 1px solid #a6a6a6;
  border-bottom: 1px solid #d4d4d4;
  box-sizing: border-box;
}
.hcell {
  border-right: 1px solid #a6a6a6;
  border-bottom: 2px solid #a6a6a6;
  box-sizing: border-box;
  display: flex;
  justify-content: flex-end;
  align-items: center;
  gap: 3px;
  font-weight: bold;
  font-size: 13px;
  letter-spacing: .35px;
  white-space: nowrap;
}
.filter {
  width: 15px;
  height: 15px;
  box-sizing: border-box;
  border: 1px solid #b5b5b5;
  background: linear-gradient(#fff, #e4eaf3);
  display: flex;
  align-items: center;
  justify-content: center;
  flex: none;
}
.filter b { border: 3px solid transparent; border-top: 4px solid #666; border-bottom: 0; }
.cell {
  border-right: 1px solid #a6a6a6;
  border-bottom: 1px solid #a6a6a6;
  box-sizing: border-box;
  line-height: 18px;
  padding: 1px 2px 0;
  white-space: nowrap;
  position: relative;
}
.cell.right { text-align: right; }
.cell.center { text-align: center; }
.cell.left { text-align: left; }
.cell.band { background: #ededed; }
.blank { border-right: 1px solid #d4d4d4; border-bottom: 1px solid #d4d4d4; box-sizing: border-box; }
.handle { position: absolute; right: 0; bottom: 0; width: 4px; height: 4px; background: #3f4fb5; clip-path: polygon(100% 0, 100% 100%, 0 100%); }

.vscroll { width: 21px; display: flex; flex-direction: column; padding: 1px 3px 0 3px; box-sizing: border-box; }
.sbtn { height: 15px; width: 15px; box-sizing: border-box; border: 1px solid #ababab; background: #fff; display: flex; align-items: center; justify-content: center; flex: none; }
.vthumb { flex: 1; width: 15px; box-sizing: border-box; border: 1px solid #ababab; border-top: 0; border-bottom: 0; background: #fff; }
.tri-up { border: 4px solid transparent; border-bottom: 4px solid #777; border-top: 0; }
.tri-down { border: 4px solid transparent; border-top: 4px solid #777; border-bottom: 0; }
.tri-left { border: 4px solid transparent; border-right: 4px solid #777; border-left: 0; }
.tri-right { border: 4px solid transparent; border-left: 4px solid #777; border-right: 0; }

/* sheet tabs */
.sheetbar { height: 28px; flex: none; background: #f3f3f3; border-top: 1px solid #ababab; box-sizing: border-box; display: flex; position: relative; }
.nav-l, .nav-r { margin-top: 9px; height: 0; border: 4px solid transparent; }
.nav-l { margin-left: 26px; border-right: 4px solid #c8c8c8; border-left: 0; }
.nav-r { margin-left: 25px; border-left: 4px solid #c8c8c8; border-right: 0; }
.sheettab {
  margin-left: 41px;
  margin-top: -1px;
  width: 65px;
  height: 25px;
  box-sizing: border-box;
  border: 1px solid #ababab;
  border-top: 0;
  border-bottom: 2px solid #217346;
  background: #fff;
  color: #217346;
  font-weight: bold;
  font-size: 12px;
  display: flex;
  align-items: center;
  justify-content: center;
}
.plus { margin: 5px 0 0 33px; }
.hdots { margin: 8px 0 0 601px; display: flex; flex-direction: column; gap: 2px; }
.hscroll { margin: 6px 0 0 14px; width: 505px; height: 15px; display: flex; background: #eaeaea; }
.hbtn { width: 15px; height: 15px; box-sizing: border-box; border: 1px solid #ababab; background: #fff; display: flex; align-items: center; justify-content: center; flex: none; }
.hbtn.right { margin-left: 46px; width: 13px; }
.hthumb { width: 431px; box-sizing: border-box; border: 1px solid #ababab; border-left: 0; background: #fff; }

/* status */
.status { height: 22px; flex: none; background: #217346; color: #fff; display: flex; align-items: center; padding-left: 7px; box-sizing: border-box; }
.views { margin-left: auto; display: flex; height: 22px; }
.view { width: 38px; display: flex; align-items: center; justify-content: center; }
.view.active { background: #0f6238; }
.zoom { display: flex; align-items: center; margin-left: 6px; }
.zm { width: 6px; height: 2px; background: #fff; }
.zp { width: 8px; height: 8px; background: linear-gradient(#fff, #fff) center / 8px 2px no-repeat, linear-gradient(#fff, #fff) center / 2px 8px no-repeat; }
.ztrack { width: 100px; height: 1px; background: #fff; margin: 0 4px 0 5px; position: relative; }
.ztrack i { position: absolute; left: 47px; top: -5px; width: 4px; height: 11px; background: #fff; }
.pct { width: 51px; padding-left: 15px; box-sizing: border-box; white-space: nowrap; }

/* taskbar */
.taskbar { height: 30px; flex: none; background: #d3d3d3; display: flex; color: #222; }
.apps { display: flex; }
.app-i { width: 37px; height: 30px; display: flex; align-items: center; justify-content: center; box-sizing: border-box; }
.app-i.start { margin-right: 2px; }
.app-i.open { box-shadow: inset 0 -2px 0 #0078d4; width: 28px; margin: 0 4.500px; }
.app-i.current { background: #e6e6e6; box-shadow: inset 0 -2px 0 #0078d4; width: 36px; }
.ps { width: 16px; height: 16px; background: #0c2340; border: 1px solid #31a8ff; box-sizing: border-box; color: #31a8ff; font: bold 8px "Liberation Sans", sans-serif; display: flex; align-items: center; justify-content: center; }
.canva { width: 16px; height: 16px; border-radius: 50%; background: linear-gradient(135deg, #19c3d8, #6a3de8); color: #fff; font: italic bold 11px "Liberation Serif", serif; display: flex; align-items: center; justify-content: center; }
.orange { width: 16px; height: 16px; border-radius: 3px; background: #f25a0c; color: #fff; font: bold 10px "Liberation Sans", sans-serif; display: flex; align-items: center; justify-content: center; }
.tray { margin-left: auto; display: flex; align-items: center; font-size: 12px; padding-right: 25px; }
.rain { margin-left: 8px; font-size: 13.300px; width: 87px; padding-top: 3px; white-space: nowrap; }
.t2 { margin-left: 9.500px; }
.t3 { margin-left: 9.500px; }
.t4 { margin-left: 9px; }
.t5 { margin-left: 8px; }
.t6 { margin-left: 10px; }
.eng { margin-left: 10px; font-size: 11.500px; }
.clock { margin-left: 16px; font-size: 11.500px; }
.bubble { margin-left: 22px; }
</style>

<style>
html, body { margin: 0; padding: 0; overflow: hidden; background: #fff; }
</style>
